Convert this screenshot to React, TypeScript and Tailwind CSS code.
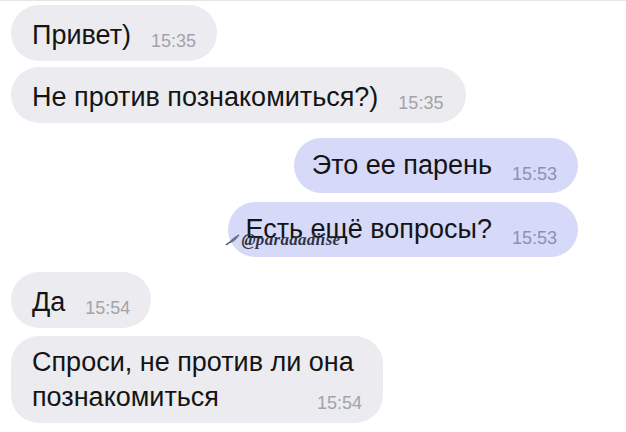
import React from "react";

const font = { fontFamily: '"Liberation Sans", Arial, sans-serif' };

function Time({ t, purple }: { t: string; purple?: boolean }) {
  return (
    <span
      className={`text-[18px] leading-none ${purple ? "translate-y-[6px] text-[#8d90b8]" : "translate-y-[3px] text-[#a3a3ab]"}`}
    >
      {t}
    </span>
  );
}

function Bubble({
  text,
  time,
  purple,
  className = "",
  children,
}: {
  text: string;
  time: string;
  purple?: boolean;
  className?: string;
  children?: React.ReactNode;
}) {
  return (
    <div
      className={`relative flex items-baseline gap-[20px] rounded-full pr-[21px] ${
        purple ? "h-[55px] bg-[#d7d9f8] pt-[12px]" : "h-[56px] bg-[#ebebf0] pt-[15px]"
      } ${className}`}
    >
      <span className="text-[27px] leading-[31px] text-[#141414]">{text}</span>
      <Time t={time} purple={purple} />
      {children}
    </div>
  );
}

export default function App() {
  return (
    <div
      className="w-[626px] h-[432px] overflow-hidden bg-white border-t border-[#e6e6e6] pl-[11px] pr-[48px] pt-[4px] flex flex-col"
      style={font}
    >
      <Bubble text="Привет)" time="15:35" className="self-start pl-[21px]" />
      <Bubble text="Не против познакомиться?)" time="15:35" className="self-start mt-[6px] pl-[21px] pr-[23px]" />
      <Bubble text="Это ее парень" time="15:53" purple className="self-end mt-[15px] pl-[18px]" />
      <Bubble text="Есть ещё вопросы?" time="15:53" purple className="self-end mt-[9px] pl-[17px]">
        <div className="absolute left-[-3px] top-[29px] flex items-center gap-[1px] text-[#2f3447]">
          <svg width="15" height="12" viewBox="0 0 15 12" fill="none">
            <path d="M1 11 L14 1" stroke="#3f4459" strokeWidth="1.2" />
            <path d="M4 9.5 Q7 3 14 1 Q11 7.5 4 9.5 Z" fill="#6a6f88" />
          </svg>
          <span
            className="text-[17px] italic font-semibold leading-none tracking-[0.3px]"
            style={{ fontFamily: '"Liberation Serif", "DejaVu Serif", serif' }}
          >
            @paraaadiise
          </span>
        </div>
      </Bubble>
      <Bubble text="Да" time="15:54" className="self-start mt-[15px] pl-[21px]" />
      <div className="self-start mt-[8px] w-[372px] h-[87px] rounded-[28px] bg-[#ebebf0] pl-[21px] pr-[21px] pt-[9px] flex flex-col">
        <span className="text-[27px] leading-[35px] text-[#141414] whitespace-nowrap">Спроси, не против ли она</span>
        <div className="flex items-baseline justify-between">
          <span className="text-[27px] leading-[35px] text-[#141414]">познакомиться</span>
          <Time t="15:54" />
        </div>
      </div>
    </div>
  );
}
